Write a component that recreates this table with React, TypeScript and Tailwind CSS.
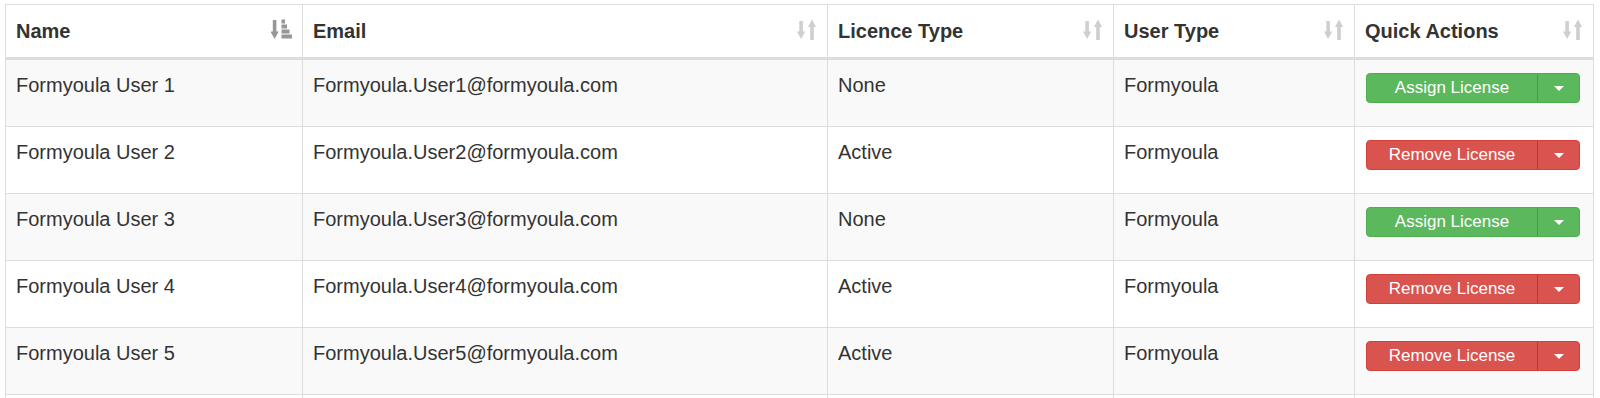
import React from "react";

interface User {
  id: number;
  name: string;
  email: string;
  licence: "None" | "Active";
  userType: string;
}

const users: User[] = [
  { id: 1, name: "Formyoula User 1", email: "Formyoula.User1@formyoula.com", licence: "None", userType: "Formyoula" },
  { id: 2, name: "Formyoula User 2", email: "Formyoula.User2@formyoula.com", licence: "Active", userType: "Formyoula" },
  { id: 3, name: "Formyoula User 3", email: "Formyoula.User3@formyoula.com", licence: "None", userType: "Formyoula" },
  { id: 4, name: "Formyoula User 4", email: "Formyoula.User4@formyoula.com", licence: "Active", userType: "Formyoula" },
  { id: 5, name: "Formyoula User 5", email: "Formyoula.User5@formyoula.com", licence: "Active", userType: "Formyoula" },
];

const cols = "grid grid-cols-[297px_525px_286px_241px_238px]";

// unsorted column: arrow down + arrow up
const SortIcon = () => (
  <svg width="20" height="21" viewBox="0 0 20 21" className="-translate-y-[2px] fill-[#cfcfcf]">
    <rect x="2.3" y="2" width="3.6" height="12" />
    <polygon points="0,12.5 8.2,12.5 4.1,20" />
    <rect x="13.2" y="7" width="3.6" height="14" />
    <polygon points="10.9,8 19.1,8 15,0.5" />
  </svg>
);

// sorted column: arrow down + growing bars
const SortedIcon = () => (
  <svg width="21" height="21" viewBox="0 0 21 21" className="-translate-y-[2px] fill-[#979797]">
    <rect x="1.8" y="1" width="3.6" height="13" />
    <polygon points="-0.5,12.5 7.7,12.5 3.6,20" />
    <rect x="10.5" y="0.5" width="3.5" height="4" />
    <rect x="10.5" y="5.5" width="5.5" height="4" />
    <rect x="10.5" y="10.5" width="8" height="4" />
    <rect x="10.5" y="15.5" width="10.5" height="4" />
  </svg>
);

const HeaderCell = ({ label, sorted, last }: { label: string; sorted?: boolean; last?: boolean }) => (
  <div className={`flex items-center justify-between pl-[10px] pr-[10px] ${last ? "" : "border-r border-[#ddd]"}`}>
    <span className="font-bold">{label}</span>
    {sorted ? <SortedIcon /> : <SortIcon />}
  </div>
);

const LicenseButton = ({ active }: { active: boolean }) => {
  const tone = active
    ? "bg-[#d9534f] border-[#d43f3a]"
    : "bg-[#5cb85c] border-[#4cae4c]";
  return (
    <div className={`mt-[13px] ml-[11px] flex h-[30px] w-[214px] rounded-[4px] border text-[17px] text-white ${tone}`}>
      <div className="flex flex-1 items-center justify-center pb-[2px] leading-none">
        {active ? "Remove License" : "Assign License"}
      </div>
      <div className={`flex w-[42px] items-center justify-center border-l ${active ? "border-[#c9302c]" : "border-[#449d44]"}`}>
        <span className="h-0 w-0 border-x-[5px] border-t-[5px] border-x-transparent border-t-white" />
      </div>
    </div>
  );
};

export default function App() {
  return (
    <div className="min-h-screen bg-white pl-[5px] pt-[4px] font-['Liberation_Sans',Arial,sans-serif] text-[20px] text-[#333]">
      <div className="w-[1589px] border-x border-t border-[#ddd]">
        <div className={`${cols} h-[55px] border-b-[3px] border-[#ddd]`}>
          <HeaderCell label="Name" sorted />
          <HeaderCell label="Email" />
          <HeaderCell label="Licence Type" />
          <HeaderCell label="User Type" />
          <HeaderCell label="Quick Actions" last />
        </div>
        {users.map((user, i) => (
          <div
            key={user.id}
            className={`${cols} h-[67px] border-b border-[#ddd] leading-[1.43] ${i % 2 === 0 ? "bg-[#f9f9f9]" : "bg-white"}`}
          >
            <div className="border-r border-[#ddd] px-[10px] pt-[11px]">{user.name}</div>
            <div className="border-r border-[#ddd] px-[10px] pt-[11px]">{user.email}</div>
            <div className="border-r border-[#ddd] px-[10px] pt-[11px]">{user.licence}</div>
            <div className="border-r border-[#ddd] px-[10px] pt-[11px]">{user.userType}</div>
            <div>
              <LicenseButton active={user.licence === "Active"} />
            </div>
          </div>
        ))}
        <div className={`${cols} h-[67px]`}>
          <div className="border-r border-[#ddd]" />
          <div className="border-r border-[#ddd]" />
          <div className="border-r border-[#ddd]" />
          <div className="border-r border-[#ddd]" />
          <div />
        </div>
      </div>
    </div>
  );
}
